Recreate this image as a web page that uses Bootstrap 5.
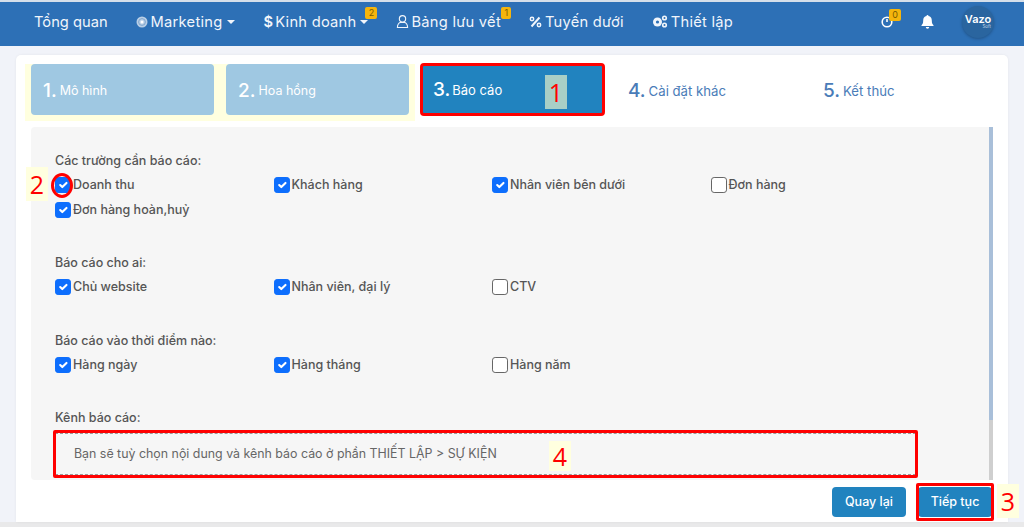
<!DOCTYPE html>
<html lang="vi"><head><meta charset="utf-8"><title>Báo cáo</title>
<link rel="stylesheet" href="https://cdn.jsdelivr.net/npm/bootstrap@5.3.0/dist/css/bootstrap.min.css">
<style>
html,body{height:527px;overflow:hidden}
body{background:#f1f3f9;font-family:Inter,"Noto Sans",sans-serif;color:#555;position:relative;padding-top:2px}
body::before{content:"";position:absolute;left:0;top:0;width:100%;height:2px;background:#d5dfea}
body::after{content:"";position:absolute;left:0;bottom:0;width:100%;height:5px;background:#e9e9ea}
.topbar{height:44px;background:#2d70b6;padding:0 0 4px 34px;color:#f1f5fb;font-size:14.7px;gap:28px;box-sizing:border-box}
.topitem{display:flex;align-items:center;gap:3px;position:relative;white-space:nowrap;color:#f1f5fb;text-decoration:none;letter-spacing:.25px}
.topitem.plainspace{letter-spacing:0}
.caretd{display:inline-block;border-top:4px solid #f1f5fb;border-left:4px solid transparent;border-right:4px solid transparent;margin-left:2px}
.cnt{position:absolute;background:#f5b50c;color:#7a5a00;font-size:9px;line-height:12px;width:12px;height:12px;border-radius:2px;text-align:center;letter-spacing:0}
.avatar{width:32px;height:32px;border-radius:50%;background:#2a659f;box-shadow:0 1px 3px rgba(0,0,0,.25);color:#fff;font-size:11px;font-weight:600;line-height:1;text-align:center;padding-top:8px}
.avatar small{display:block;font-size:4.500px;text-align:right;padding-right:3px;font-weight:400;color:#c5d5e5}
.sheet{position:absolute;left:16px;top:55px;width:992px;height:467px;background:#fff;border-radius:5px 5px 0 0;box-shadow:0 0 3px rgba(0,0,0,.06);padding:9px 9px 0 9px;z-index:1}
.stepdone{background:#ffffdf;width:390px;height:57px;gap:12px;padding-left:6px}
.stepbox{width:183px;height:51px;border-radius:4px;background:#9fc8e2;color:#fff;padding:4px 0 0 12px;font-size:12.500px;display:flex;align-items:center;gap:3px}
.stepbox b,.stepnext b{font-size:19px;font-weight:500}
.stepnow{background:#2183bf;border:3px solid #f00;width:185px;height:53px;margin:-1px 0 0 5px;padding:2px 0 0 10px;position:relative;font-size:13px;gap:2px}
.stepnext{width:195px;height:51px;color:#4a7cb8;padding:4px 0 0 23px;font-size:13.200px;display:flex;align-items:center;gap:3px}
.panel{position:absolute;left:15px;top:72px;width:962px;height:353px;background:#f6f6f6;border-radius:4px;padding:25.500px 24px 0;font-size:12.500px;font-weight:500;color:#555}
.panel::after{content:"";position:absolute;right:0;top:0;width:4px;height:100%;background:linear-gradient(#a9bfd9 0,#a9bfd9 83%,#cfcfcf 83%)}
.grouphead{margin:0 0 8.500px;line-height:15px}
.optrow{display:grid;grid-template-columns:repeat(4,218.500px);row-gap:7px}
.gapa{margin-bottom:35.500px}.gapb{margin-bottom:36.500px}.gapc{margin-bottom:35.500px}
.optrow .form-check{margin:0;padding:0;min-height:18px;display:flex;align-items:center;gap:2px;line-height:18px}
.optrow .form-check-input{margin:0;width:16px;height:16px;float:none;flex:none;border-color:#666}
.optrow .form-check-input:checked{border-color:#0d6efd}
.notebox{border:1px dashed #999;height:42px;width:861px;font-weight:400;font-size:12.400px;color:#666;display:flex;align-items:center;padding-left:18px}
.btn-step{position:absolute;top:432px;height:30px;width:74px;padding:0;background:#2183bf;color:#fff;font-size:12.500px;font-weight:500;border:0;border-radius:4px}
.btn-back{left:816px}.btn-next{left:902px}
.redframe{position:absolute;border:3px solid #f00;border-radius:2px;pointer-events:none;z-index:2}
.mark1{position:absolute;background:#ffffdf;color:#f00;font-family:"Open Sans",sans-serif;font-size:25px;line-height:1;display:flex;align-items:center;justify-content:center;z-index:2}
.redcircle{position:absolute;left:51px;top:173px;width:22px;height:25px;border:3px solid #f00;border-radius:50%;z-index:2}
.tint{background:#a8cfc6}
</style></head>
<body>
<nav class="topbar d-flex align-items-center">
  <a class="topitem plainspace" href="#">Tổng quan</a>
  <a class="topitem" href="#"><svg width="12" height="12" viewBox="0 0 12 12"><circle cx="6" cy="6" r="5.500" fill="#b9cfe6"/><circle cx="6" cy="6" r="3.400" fill="none" stroke="#7ea5cf"/><circle cx="6" cy="6" r="1.500" fill="#fff"/></svg>Marketing<span class="caretd"></span></a>
  <a class="topitem" href="#" style="gap:2px"><b class="fw-semibold">$</b>Kinh doanh<span class="caretd"></span><span class="cnt" style="left:102px;top:-4px">2</span></a>
  <a class="topitem" href="#" style="gap:2px"><svg width="13" height="15" viewBox="0 0 14 15" fill="none" stroke="#f1f5fb" stroke-width="1.200"><circle cx="7" cy="4.600" r="3.400"/><path d="M1.500 14c0-3.600 2-5.400 3.400-5.400h4.200c1.400 0 3.400 1.800 3.400 5.400z"/></svg>Bảng lưu vết<span class="cnt" style="left:105px;top:-4px;width:10px">1</span></a>
  <a class="topitem" href="#"><svg width="13" height="12" viewBox="0 0 13 12" fill="none" stroke="#f1f5fb"><path d="M10.500 1.500 2.500 10.500" stroke-width="2"/><circle cx="3" cy="3" r="1.700" stroke-width="1.500"/><circle cx="10" cy="9" r="1.700" stroke-width="1.500"/></svg>Tuyến dưới</a>
  <a class="topitem" href="#"><svg width="16" height="13" viewBox="0 0 15 13" fill="#f1f5fb"><circle cx="5" cy="7" r="4.500"/><circle cx="5" cy="7" r="1.600" fill="#2d70b6"/><circle cx="12" cy="3" r="2.600"/><circle cx="12" cy="3" r="1" fill="#2d70b6"/><circle cx="12" cy="10" r="2.600"/><circle cx="12" cy="10" r="1" fill="#2d70b6"/></svg>Thiết lập</a>
  <span class="topitem ms-auto"><svg width="12" height="12" viewBox="0 0 12 12" fill="none" stroke="#fff" stroke-width="1.600"><circle cx="6" cy="6" r="4.800"/><path d="M6 6V3"/></svg><span class="cnt" style="left:8px;top:-7px">0</span></span>
  <span class="topitem"><svg width="13" height="14" viewBox="0 0 13 14" fill="#fff"><path d="M6.500 0a1 1 0 0 1 1 1.100C9.700 1.600 10.800 3.300 10.800 5.500c0 3 .9 3.900 1.700 4.700V11H.5v-.8c.8-.8 1.700-1.700 1.700-4.700 0-2.200 1.100-3.900 3.300-4.400A1 1 0 0 1 6.500 0z"/><path d="M4.800 12h3.400a1.700 1.700 0 0 1-3.400 0z"/></svg></span>
  <div class="avatar" style="margin-right:30px">Vazo<small>Soft</small></div>
</nav>
<main class="sheet">
  <div class="d-flex">
    <div class="stepdone d-flex">
      <div class="stepbox"><b>1.</b> Mô hình</div>
      <div class="stepbox"><b>2.</b> Hoa hồng</div>
    </div>
    <div class="stepbox stepnow"><b>3.</b> Báo cáo</div>
    <div class="stepnext"><b>4.</b> Cài đặt khác</div>
    <div class="stepnext"><b>5.</b> Kết thúc</div>
  </div>
  <section class="panel">
    <p class="grouphead">Các trường cần báo cáo:</p>
    <div class="optrow gapa">
      <div class="form-check"><input class="form-check-input" type="checkbox" checked>Doanh thu</div>
      <div class="form-check"><input class="form-check-input" type="checkbox" checked>Khách hàng</div>
      <div class="form-check"><input class="form-check-input" type="checkbox" checked>Nhân viên bên dưới</div>
      <div class="form-check"><input class="form-check-input" type="checkbox">Đơn hàng</div>
      <div class="form-check"><input class="form-check-input" type="checkbox" checked>Đơn hàng hoàn,huỷ</div>
    </div>
    <p class="grouphead">Báo cáo cho ai:</p>
    <div class="optrow gapb">
      <div class="form-check"><input class="form-check-input" type="checkbox" checked>Chủ website</div>
      <div class="form-check"><input class="form-check-input" type="checkbox" checked>Nhân viên, đại lý</div>
      <div class="form-check"><input class="form-check-input" type="checkbox">CTV</div>
    </div>
    <p class="grouphead">Báo cáo vào thời điểm nào:</p>
    <div class="optrow gapc">
      <div class="form-check"><input class="form-check-input" type="checkbox" checked>Hàng ngày</div>
      <div class="form-check"><input class="form-check-input" type="checkbox" checked>Hàng tháng</div>
      <div class="form-check"><input class="form-check-input" type="checkbox">Hàng năm</div>
    </div>
    <p class="grouphead">Kênh báo cáo:</p>
    <div class="notebox">Bạn sẽ tuỳ chọn nội dung và kênh báo cáo ở phần THIẾT LẬP &gt; SỰ KIỆN</div>
  </section>
  <button class="btn btn-step btn-back" type="button">Quay lại</button>
  <button class="btn btn-step btn-next" type="button">Tiếp tục</button>
</main>
<span class="mark1 tint" style="left:545px;top:75px;width:22px;height:34px">1</span>
<span class="redcircle"></span>
<span class="mark1" style="left:26px;top:167px;width:22px;height:34px">2</span>
<span class="redframe" style="left:53px;top:430px;width:865px;height:48px"></span>
<span class="mark1" style="left:549px;top:441px;width:22px;height:30px">4</span>
<span class="redframe" style="left:916px;top:483px;width:78px;height:38px"></span>
<span class="mark1" style="left:997px;top:484px;width:22px;height:34px">3</span>
</body></html>
